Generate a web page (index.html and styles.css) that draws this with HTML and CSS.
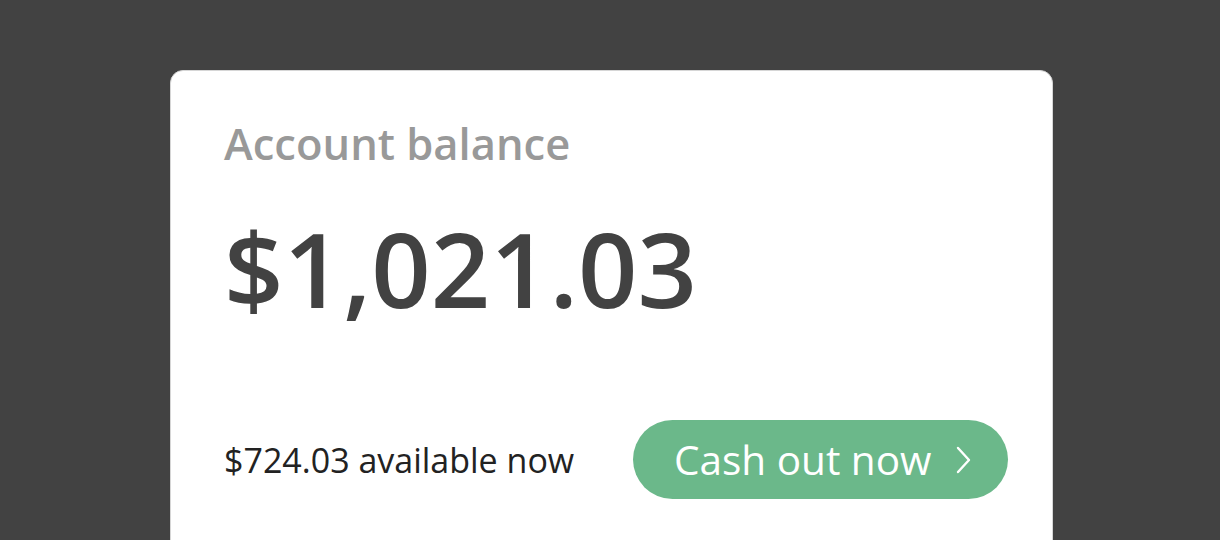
FILE: index.html
```html
<!DOCTYPE html>
<html lang="en">
<head>
    <meta charset="UTF-8">
    <meta name="viewport" content="width=device-width, initial-scale=1.0">
    <title>Account balance</title>
    <link rel="stylesheet" href="styles.css">
</head>
<body>
    <div class="card">
        <h2 class="label">Account balance</h2>
        <div class="amount">$1,021.03</div>
        <div class="footer">
            <span class="available">$724.03 available now</span>
            <button class="cashout">
                Cash out now
                <svg class="chevron" width="20" height="28" viewBox="0 0 20 28">
                    <path d="M5 2 L16 14 L5 26" fill="none" stroke="#fff" stroke-width="2.4" stroke-linecap="round" stroke-linejoin="round"/>
                </svg>
            </button>
        </div>
    </div>
</body>
</html>
```

FILE: styles.css
```css
body {
    margin: 0;
    background-color: #424242;
    font-family: "Open Sans", "Noto Sans", sans-serif;
    height: 540px;
    overflow: hidden;
}

.card {
    width: 883px;
    margin: 70px 0 0 170px;
    height: 520px;
    background-color: #fff;
    border: 1px solid #d6d6d6;
    border-radius: 13px;
    padding: 0 44px 0 53px;
    box-sizing: border-box;
}

.label {
    margin: 0;
    padding-top: 45px;
    font-size: 43.5px;
    font-weight: 600;
    line-height: 56px;
    color: #999;
}

.amount {
    margin-top: 36px;
    font-size: 104px;
    font-weight: 600;
    line-height: 120px;
    color: #424242;
}

.footer {
    margin-top: 92px;
    display: flex;
    justify-content: space-between;
    align-items: center;
}

.available {
    font-size: 34px;
    color: #222;
}

.cashout {
    display: flex;
    align-items: center;
    gap: 22px;
    height: 79px;
    width: 375px;
    padding: 0 0 0 41px;
    border: none;
    border-radius: 40px;
    background-color: #6bb88a;
    color: #fff;
    font-family: inherit;
    font-size: 40.5px;
    cursor: pointer;
}
```
